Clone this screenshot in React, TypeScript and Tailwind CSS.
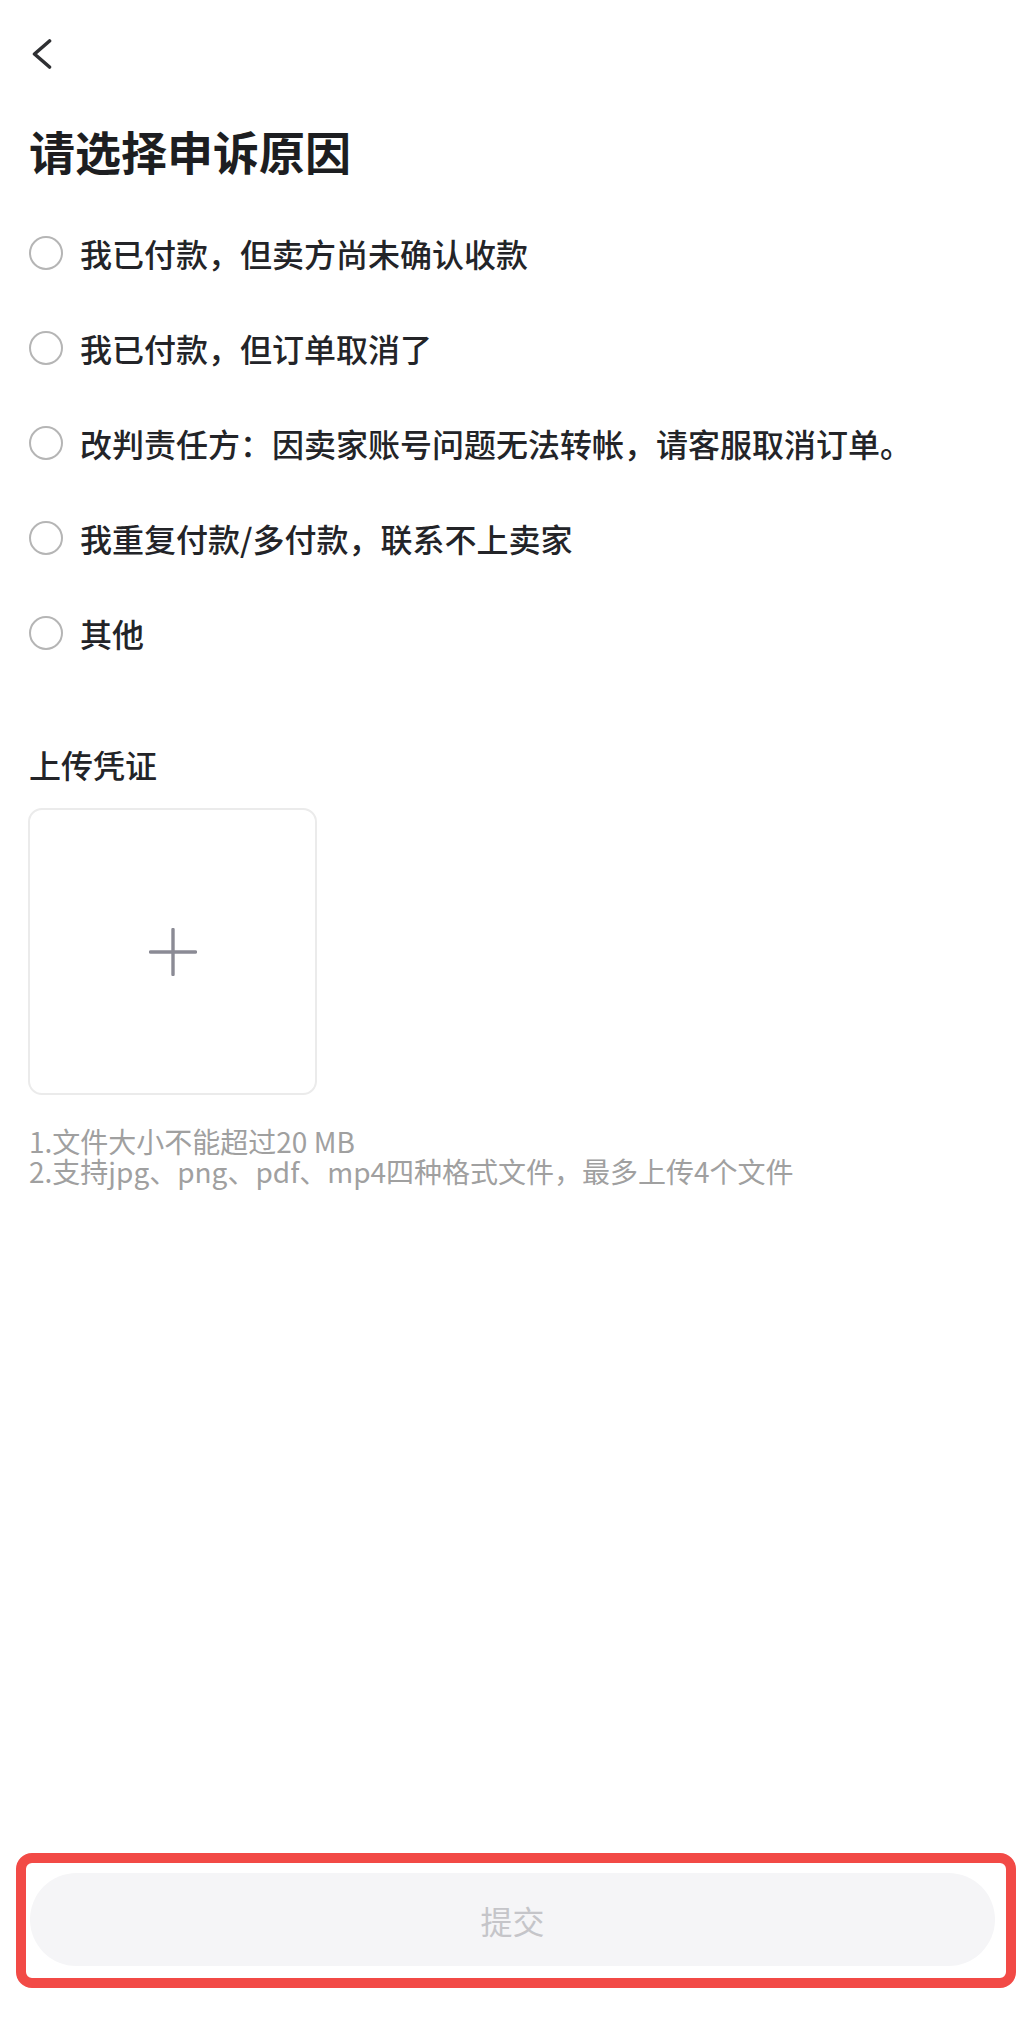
const REASONS = [
  "我已付款，但卖方尚未确认收款",
  "我已付款，但订单取消了",
  "改判责任方：因卖家账号问题无法转帐，请客服取消订单。",
  "我重复付款/多付款，联系不上卖家",
  "其他",
];

function BackIcon() {
  return (
    <svg width="20" height="30" viewBox="0 0 20 30" fill="none" aria-hidden>
      <path
        d="M17.5 2 L2.5 15 L17.5 28"
        stroke="#2f3033"
        strokeWidth="3.6"
        strokeLinecap="round"
        strokeLinejoin="round"
      />
    </svg>
  );
}

function PlusIcon() {
  return (
    <svg width="48" height="48" viewBox="0 0 48 48" fill="none" aria-hidden>
      <path
        d="M24 1.5 V46.5 M1.5 24 H46.5"
        stroke="#8b8b95"
        strokeWidth="3.4"
        strokeLinecap="round"
      />
    </svg>
  );
}

export default function App() {
  return (
    <div className="flex min-h-[2018px] flex-col bg-white font-['Noto_Sans_CJK_SC',sans-serif]">
      <header className="flex h-[108px] items-center pl-[32px]">
        <BackIcon />
      </header>

      <h1 className="mt-[14px] pl-[29px] text-[46px] font-bold leading-[56px] text-[#1d1e21]">
        请选择申诉原因
      </h1>

      <ul className="mt-[27px] px-[29px]">
        {REASONS.map((reason) => (
          <li key={reason} className="flex h-[95px] items-center gap-[17px]">
            <span className="h-[34px] w-[34px] shrink-0 rounded-full border-2 border-[#b5b5b5]" />
            <span className="text-[32px] font-medium leading-[40px] text-[#232428]">
              {reason}
            </span>
          </li>
        ))}
      </ul>

      <section className="mt-[64px] px-[28px]">
        <h2 className="pl-px text-[32px] font-medium leading-[40px] text-[#232428]">
          上传凭证
        </h2>
        <button
          type="button"
          className="mt-[24px] flex h-[287px] w-[289px] items-center justify-center rounded-[14px] border-2 border-[#ebebeb] bg-white"
        >
          <PlusIcon />
        </button>
        <div className="mt-[31px] pl-px text-[28px] leading-[30px] text-[#a0a0a0]">
          <p>1.文件大小不能超过20 MB</p>
          <p>2.支持jpg、png、pdf、mp4四种格式文件，最多上传4个文件</p>
        </div>
      </section>

      <footer className="mt-auto mr-[8px] mb-[30px] ml-[16px] rounded-[16px] border-[10px] border-[#f24a46] pt-[10px] pr-[11px] pb-[12px] pl-[4px]">
        <button
          type="button"
          disabled
          className="flex h-[93px] w-full items-center justify-center rounded-full bg-[#f5f5f7] text-[32px] leading-none text-[#c5c5c9]"
        >
          提交
        </button>
      </footer>
    </div>
  );
}
